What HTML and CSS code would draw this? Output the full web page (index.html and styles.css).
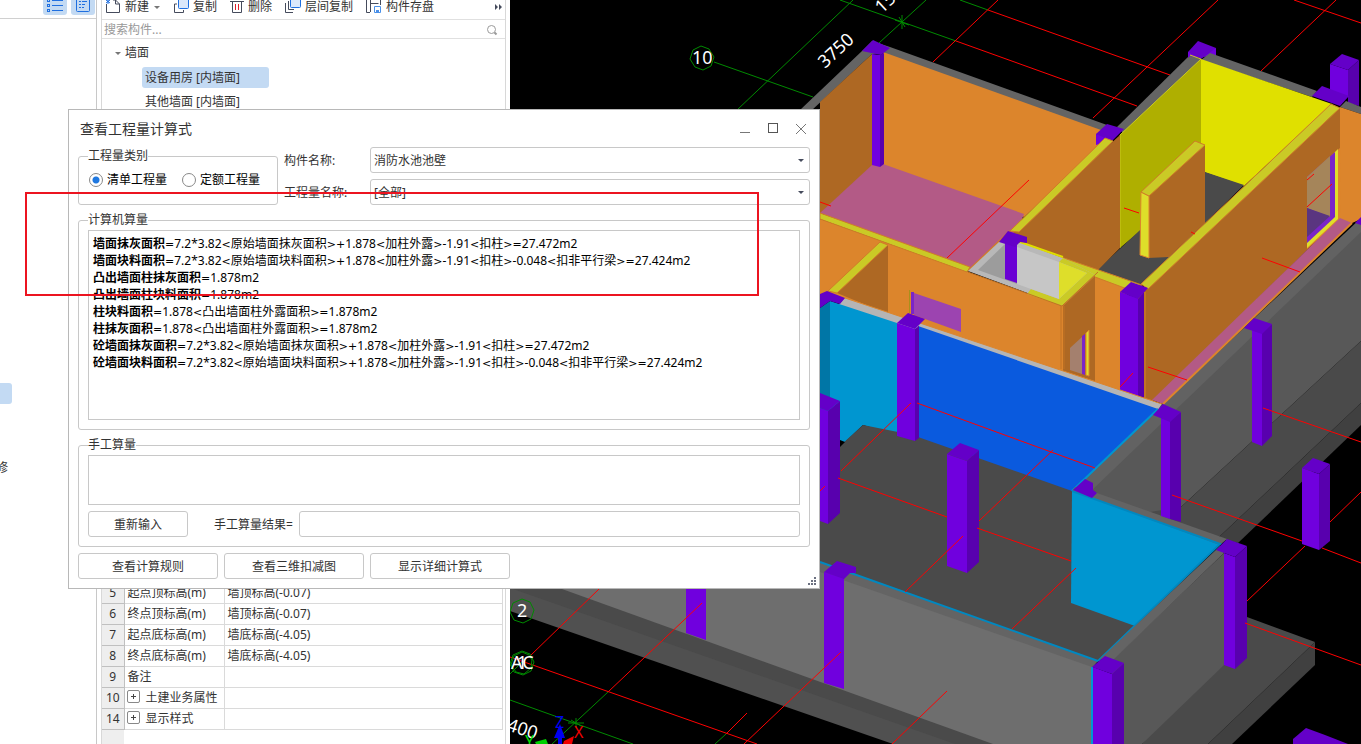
FILE: index.html
```html
<!DOCTYPE html>
<html lang="zh-CN">
  <head>
    <meta charset="utf-8" />
    <title>查看工程量计算式</title>
    <link rel="stylesheet" href="styles.css" />
  </head>

  <body>
    <div class="app">
      <aside class="nav">
        <div class="nav-tools">
          <button class="tool-on" aria-label="列表">
            <svg width="16" height="16" viewBox="0 0 16 16" fill="none" stroke="#1f6fe0">
              <rect x="0.500" y="-0.500" width="2" height="2" />
              <rect x="0.500" y="4.500" width="2" height="2" />
              <rect x="0.500" y="9.500" width="2" height="2" />
              <path d="M5 0.500h11M5 5.500h11M5 10.500h11" />
            </svg>
          </button>
          <button class="tool-on" aria-label="详情">
            <svg width="14" height="16" viewBox="0 0 14 16" fill="none" stroke="#1f6fe0">
              <rect x="0.500" y="-3" width="13" height="14.500" rx="1" />
              <path d="M3 1.500h2M6 1.500h5M3 4.500h2M6 4.500h3M3 7.500h2M6 7.500h2" />
            </svg>
          </button>
        </div>
        <ul class="nav-list">
          <li class="on"></li>
          <li></li>
          <li></li>
          <li>修</li>
        </ul>
      </aside>

      <section class="parts">
        <div class="toolbar">
          <button>
            <svg width="16" height="14" viewBox="0 0 16 14" fill="none" stroke="#454b5c">
              <path d="M1.500 4v8.500h13V4l-4-4H8" />
              <path d="M10.500 0v4h4" />
              <path d="M1 0l4 3M5 0L1 3M3 0v4" stroke="#1f6fe0" />
            </svg>
            新建 <i class="caret"></i>
          </button>
          <button>
            <svg width="16" height="14" viewBox="0 0 16 14" fill="none" stroke="#454b5c">
              <path d="M4 4H1.500v8.500h9V10" />
              <rect x="5.500" y="-2" width="10" height="10.500" rx="1" fill="#dbe8fb" stroke="#1f6fe0" />
            </svg>
            复制
          </button>
          <button>
            <svg width="14" height="14" viewBox="0 0 14 14" fill="none" stroke="#454b5c">
              <path d="M0 1.500h14M2.500 2v10.500h9V2" />
              <path d="M5.500 4v6M8.500 4v6" stroke="#e0202c" />
            </svg>
            删除
          </button>
          <button>
            <svg width="16" height="14" viewBox="0 0 16 14" fill="none" stroke="#454b5c">
              <path d="M0.500 3v9.500H8M3.500 1v8.500H9" />
              <rect x="5.500" y="-2" width="10" height="9.500" rx="1" fill="#dbe8fb" stroke="#1f6fe0" />
            </svg>
            层间复制
          </button>
          <button>
            <svg width="16" height="14" viewBox="0 0 16 14" fill="none" stroke="#454b5c">
              <path d="M0.500 0v12.500H4M4.500 12V0M4.500 3.500h8M14.500 0v5" />
              <path d="M8.500 6.500h6v6h-6z" fill="#fff" stroke="#4a90e8" />
              <path d="M10 10h3v3h-3z" fill="#4a90e8" stroke="none" />
            </svg>
            构件存盘
          </button>
          <button class="more" aria-label="更多">
            <svg width="8" height="6" viewBox="0 0 8 6"><path d="M0 0l3 3-3 3zM4 0l3 3-3 3z" fill="#454b5c" /></svg>
          </button>
        </div>

        <div class="search">
          <input type="text" placeholder="搜索构件..." aria-label="搜索构件" />
          <svg width="12" height="12" viewBox="0 0 12 12" fill="none" stroke="#9a9a9a">
            <circle cx="5.500" cy="5.500" r="4" />
            <path d="M8.500 8.500l2 2" stroke-width="2" />
          </svg>
        </div>

        <ul class="tree">
          <li><i class="caret"></i>墙面</li>
          <li class="leaf"><span class="picked">设备用房 [内墙面]</span></li>
          <li class="leaf"><span>其他墙面 [内墙面]</span></li>
        </ul>

        <table class="props">
          <tbody>
            <tr><th>5</th><td class="name">起点顶标高(m)</td><td>墙顶标高(-0.07)</td></tr>
            <tr><th>6</th><td class="name">终点顶标高(m)</td><td>墙顶标高(-0.07)</td></tr>
            <tr><th>7</th><td class="name">起点底标高(m)</td><td>墙底标高(-4.05)</td></tr>
            <tr><th>8</th><td class="name">终点底标高(m)</td><td>墙底标高(-4.05)</td></tr>
            <tr><th>9</th><td class="name">备注</td><td></td></tr>
            <tr><th>10</th><td class="name"><i class="plus"></i>土建业务属性</td><td></td></tr>
            <tr><th>14</th><td class="name"><i class="plus"></i>显示样式</td><td></td></tr>
            <tr class="rest"><th></th><td></td><td></td></tr>
          </tbody>
        </table>
      </section>

      <main class="view">
        <svg class="scene" viewBox="510 0 851 744" preserveAspectRatio="xMinYMin slice">
          <!-- axis grid behind the model -->
          <g class="axis-green">
            <path d="M714 62L813 97M737 110L853 0M840 0L956 41M926 0L879 43M960 0L988 10" />
            <path d="M895 20l14 5M899 17l6 10M902 15v14" />
            <path d="M510 700L633 744M608 692L552 744M726 734L715 744M510 674l12-12M568 723h16M571 720l10 6M576 718v10" />
            <path d="M714 57l-3 9-8 4-8-3-5-8 3-9 8-4 8 3z" />
          </g>
          <g class="axis-red">
            <path d="M988 10L1170 75M956 41L1137 106M998 0L933 62M1218 0L1093 118M1336 0L1260 72M1294 0L1361 23" />
          </g>

          <!-- outer slab and walls -->
          <polygon fill="#505050" points="510,588 520,588 960,744 893,744 510,611" />
          <polygon fill="#4a4a4a" points="513,580 562,580 1000,744 955,744 513,589" />
          <polygon fill="#585858" points="1361,222 1361,341 1181,507 1181,524 1075,490 1163,404" />
          <polygon fill="#626262" points="1361,218 1361,232 1090,492 1073,490 1163,404" />
          <polygon fill="#4a4a4a" points="1361,341 1361,403 1218,538 1150,512 1181,507" />
          <polygon fill="#404040" points="1361,403 1361,425 1238,543 1218,538" />
          <polygon fill="#4a4a4a" points="1224,640 1247,617 1315,642 1208,744 1142,744" />
          <polygon fill="#404040" points="1315,642 1315,665 1232,744 1208,744" />
          <polygon fill="#585858" points="1224,553 1224,665 1142,744 1124,744 1112,674 1112,660" />

          <!-- back left room -->
          <polygon fill="#646464" points="862,51 872,41 890,47 1107,125 1100,131 883,53 872,54 812,110 800,110" />
          <polygon fill="#ae6823" points="872,54 872,166 820,214 820,102" />
          <polygon fill="#dc852c" points="883,52 1101,130 1110,140 1024,217 883,165" />
          <polygon fill="#b35a86" points="872,165 883,164 1024,214 1012,246 968,271 820,213" />
          <polygon fill="#6400c8" points="873,40 890,48 881,55 862,51" />
          <polygon fill="#7000de" points="872,54 880,55 880,167 872,165" />
          <polygon fill="#5800ae" points="880,55 884,53 884,164 880,167" />

          <!-- yellow room -->
          <polygon fill="#646464" points="1190,55 1201,59 1123,133 1117,127" />
          <polygon fill="#7000de" points="1188,52 1216,48 1216,56 1188,58" />
          <polygon fill="#6400c8" points="1198,41 1216,48 1201,59 1188,52" />
          <polygon fill="#646464" points="1210,53 1317,91 1312,97 1201,60" />
          <polygon fill="#646464" points="1190,56 1201,59 1192,68 1180,66" />
          <polygon fill="#afaf00" points="1120,135 1201,59 1201,180 1120,248" />
          <polygon fill="#e0e000" points="1201,59 1332,104 1244,186 1201,171" />
          <path d="M1120 248V135L1201 59l-11-4" fill="none" stroke="#cccc1e" />
          <polygon fill="#4a4a4a" points="1205,172 1244,185 1142,285 1097,270 1139,231" />
          <polygon fill="#7000de" points="1096,134 1112,132 1112,141 1096,145" />
          <polygon fill="#6400c8" points="1107,124 1124,129 1112,141 1096,134" />
          <polygon fill="#ae6823" points="1120,135 1120,248 1097,271 1018,246 1012,234" />
          <polygon class="top" points="1105,138 1113,141 1019,232 1010,231" />
          <path d="M1010 231L968 271" stroke="#cf7c28" stroke-width="2" />

          <!-- partition -->
          <polygon fill="#ae6823" points="1149,196 1205,145 1205,223 1169,257 1148,258" />
          <polygon fill="#dede2a" stroke="#dc852c" points="1141,192 1149,196 1149,258 1140,255" />
          <polygon class="top" points="1141,192 1195,141 1205,145 1149,196" />

          <!-- long wall and its window -->
          <polygon fill="#7000de" points="1330,64 1348,70 1348,97 1330,95" />
          <polygon fill="#5800ae" points="1348,70 1359,60 1359,106 1348,103" />
          <polygon fill="#6400c8" points="1342,54 1359,60 1348,70 1330,64" />
          <polygon fill="#646464" points="1346,101 1361,107 1361,114 1340,107" />
          <polygon fill="#6400c8" points="1322,86 1349,96 1340,106 1312,96" />
          <polygon fill="#dc852c" points="1340,107 1361,114 1361,219 1350,224 1336,219" />
          <polygon fill="#ae6823" points="1340,108 1340,218 1152,402 1138,400 1138,294" />
          <polygon class="top" points="1331,104 1340,108 1148,289 1141,284" />
          <polygon fill="#dc852c" points="1340,148 1341,220 1307,249 1307,177" />
          <polygon fill="#e0de2a" points="1338,149 1338,219 1307,248 1307,240 1334,215 1334,153" />
          <polygon fill="#7a25c8" points="1335,152 1335,217 1307,243 1307,177" />
          <polygon fill="#a5855a" points="1330,156 1330,217 1307,208 1307,177" />
          <polygon fill="#5a3580" points="1307,208 1330,216 1307,237" />
          <polygon fill="#b35a86" points="1340,218 1352,223 1163,404 1152,400" />
          <path d="M1352 223L1163 404" stroke="#dc852c" stroke-width="2" />
          <polygon fill="#6400c8" points="1355,223 1361,217 1361,225" />

          <!-- shaft and corridor -->
          <polygon fill="#dc852c" points="820,219 968,272 1062,306 1095,275 1127,286 1127,394 1062,373 845,301 820,300" />
          <polygon class="top" points="820,213 970,267 967,272 820,219" />
          <polygon class="top" points="1061,257 1142,285 1130,290 1095,277" />
          <polygon fill="#ae6823" points="1063,306 1095,276 1095,381 1063,371" />
          <path d="M1061 306v63M1064 306v63" stroke="#c27325" />
          <polygon fill="#b8b8b8" points="999,242 1022,243 1063,258 1095,275 1062,306 968,271" />
          <polygon fill="#caca26" points="1063,258 1095,275 1062,306 1027,294 1031,289 1059,299 1087,273 1059,262" />
          <path d="M1020 242L1063 257" stroke="#dede00" stroke-width="2" />
          <polygon fill="#9c9c9c" points="1005,244 1017,247 1017,284 978,270" />
          <polygon fill="#c6c6c6" points="1017,247 1059,262 1059,299 1017,284" />
          <polygon fill="#dede2a" points="1059,262 1087,273 1059,299" />
          <path d="M968 272L1062 306L1098 272" fill="none" stroke="#c27325" />
          <polygon fill="#6a00d4" points="1005,240 1017,243 1017,283 1005,279" />
          <polygon fill="#6400c8" points="1008,231 1027,237 1027,243 1020,242 1015,247 999,242" />
          <polygon fill="#a4806e" points="1070,348 1082,337 1082,374 1070,370" />
          <polygon fill="#7a25c8" points="1082,336 1085,334 1085,375 1082,374" />
          <polygon fill="#e0de2a" stroke="#dc852c" points="1086,333 1089,330 1089,376 1086,375" />
          <polygon fill="#ae6823" points="888,245 888,314 837,293" />
          <polygon class="top" points="880,242 888,245 837,293 828,291" />
          <polygon fill="#9c44b0" points="914,293 961,309 961,332 914,315" />
          <path d="M912.500 292v22" stroke="#7a25c8" stroke-width="3" />
          <path d="M909.500 290v23" stroke="#a8901c" />
          <polygon fill="#5800ae" points="1138,299 1144,292 1144,400 1138,398" />
          <polygon fill="#7000de" points="1120,292 1138,298 1138,398 1120,392" />
          <polygon fill="#6400c8" points="1131,282 1148,288 1138,299 1120,292" />
          <path d="M1145 292v106" stroke="#c27325" stroke-width="2" />

          <!-- blue pool walls -->
          <polygon fill="#b5b5b5" points="845,298 1162,404 1157,411 838,305" />
          <path d="M845 298L1162 404" stroke="#dc852c" />
          <polygon fill="#0076a6" points="830,301 830,450 820,450 820,308" />
          <polygon fill="#0096d0" points="830,301 897,323 897,435 863,425 845,442 830,450" />
          <polygon fill="#4a4a4a" points="863,425 918,436 1072,489 1137,628 1098,661 820,562 820,464" />
          <polygon fill="#0a5ade" points="918,326 1158,409 1072,491 918,437" />
          <path d="M1158 409L1072 491" stroke="#0096d0" stroke-width="2" />
          <polygon points="840,440 845,442 840,447" />
          <polygon fill="#6400c8" points="827,291 845,298 840,304 830,301 820,308 820,294" />
          <polygon fill="#0096d0" points="1072,491 1220,544 1135,626 1071,603" />

          <!-- near walls -->
          <polygon fill="#646464" points="1075,487 1097,493 1227,539 1220,545 1072,491" />
          <path d="M1072 491L1220 544L1098 661" fill="none" stroke="#0088c0" stroke-width="2" />
          <polygon fill="#646464" points="1220,546 1224,553 1112,661 1100,659" />
          <polygon fill="#646464" points="540,470 820,562 1098,661 1092,668 820,573 560,580" />
          <polygon fill="#6e6e6e" points="550,584 820,572 1092,667 1092,744 993,744 562,589" />
          <path d="M820 562L1098 661" stroke="#0088c0" stroke-width="2" />
          <path d="M1092 667v77" stroke="#0096d0" stroke-width="2" />

          <!-- columns -->
          <g fill="#7000de">
            <polygon points="1161,416 1170,420 1170,519 1161,516" />
            <polygon points="1252,330 1262,333 1262,446 1252,442" />
            <polygon points="1302,468 1319,474 1319,550 1302,544" />
            <polygon points="947,454 967,461 967,573 947,566" />
            <polygon points="897,323 915,329 915,441 897,436" />
            <polygon points="820,408 828,411 828,524 820,521" />
            <polygon points="1224,553 1235,557 1235,669 1224,665" />
            <polygon points="1093,667 1112,674 1112,744 1093,744" />
            <polygon points="824,572 844,578 844,689 824,683" />
            <polygon points="686,580 706,580 706,640 686,633" />
          </g>
          <g fill="#5800ae">
            <polygon points="1170,421 1181,412 1181,522 1170,519" />
            <polygon points="1262,333 1272,324 1272,436 1262,446" />
            <polygon points="1319,474 1330,464 1330,541 1319,550" />
            <polygon points="967,461 979,450 979,562 967,573" />
            <polygon points="915,329 919,326 919,438 915,441" />
            <polygon points="828,411 840,401 840,513 828,524" />
            <polygon points="1235,557 1247,546 1247,658 1235,669" />
            <polygon points="1112,674 1124,663 1124,744 1112,744" />
          </g>
          <g fill="#6400c8">
            <polygon points="1163,404 1181,412 1170,422 1153,415" />
            <polygon points="1254,318 1272,324 1262,334 1244,328" />
            <polygon points="1313,458 1330,464 1319,474 1302,468" />
            <polygon points="960,443 979,450 967,461 947,454" />
            <polygon points="908,313 925,319 915,329 897,323" />
            <polygon points="820,393 840,401 828,411 820,408" />
            <polygon points="1227,539 1247,546 1235,557 1216,550" />
            <polygon points="1105,656 1124,663 1112,674 1092,667" />
            <polygon points="837,561 856,567 856,573 850,573 844,579 824,572" />
            <polygon points="1085,479 1093,483 1093,490 1097,493 1092,498 1073,490" />
            <polygon points="1306,728 1325,735 1348,744 1293,744 1293,739" />
          </g>

          <!-- axis lines seen over the model -->
          <g class="axis-red">
            <path d="M1029 180L947 258M820 202L831 206M1124 208L1139 213M1191 232l4 2M1262 258L1300 272M1148 367L1187 380M1307 207L1332 184M1307 180l7-6" />
            <path d="M917 403L1095 468M911 403L841 471M820 491l5-5M1053 450L979 521M838 478L947 517M1263 408L1361 442M1133 373L1120 387" />
            <path d="M1172 495L1302 541M1322 548L1361 563M1361 492L1330 522M1305 546L1247 601M1245 623L1361 665" />
            <path d="M977 528L1071 561M1076 568L1012 629M963 536L905 592M947 691L892 744" />
            <path d="M599 589L530 656M702 603L608 692M841 652L744 744M747 713L726 734M510 657L757 744" />
          </g>
          <g class="axis-green">
            <path d="M534 610l-3 9-8 4-9-3-4-8 3-9 9-4 8 3z" />
            <path d="M534 662l-3 9-8 4-9-3-4-8 3-9 9-4 8 3zM532 660l-1 8-7 6-8-2-5-7 3-9 8-4 7 3z" />
          </g>

          <g class="axis-text">
            <text x="692" y="64">10</text>
            <text x="517" y="617">2</text>
            <text x="511" y="669">AC</text>
            <text x="517" y="669">1</text>
            <text transform="translate(825 69) rotate(-43)">3750</text>
            <text transform="translate(882 14) rotate(-43)">15</text>
            <text transform="translate(506 730) rotate(18)">400</text>
          </g>

          <!-- coordinate gizmo -->
          <g class="gizmo">
            <path d="M554 738l6-14 5 14zM558 736h4v8h-4z" fill="#0000f0" />
            <path d="M564 741l10-5-2 8h-9z" fill="#f00000" />
            <path d="M535 742l11-3 2 5h-12z" fill="#00d000" />
            <text x="555" y="728" fill="#0000f0">Z</text>
            <text x="574" y="738" fill="#f00000">X</text>
            <text x="525" y="747" fill="#00e000">Y</text>
          </g>
        </svg>
      </main>
    </div>

    <div class="dialog" role="dialog" aria-labelledby="dlgTitle">
      <div class="title-bar">
        <h1 id="dlgTitle">查看工程量计算式</h1>
        <button aria-label="最小化">
          <svg width="12" height="12" viewBox="0 0 12 12"><path d="M1 9.500h10" stroke="#777" /></svg>
        </button>
        <button aria-label="最大化">
          <svg width="12" height="12" viewBox="0 0 12 12"><rect x="1.500" y="0.500" width="9" height="9" fill="none" stroke="#555" /></svg>
        </button>
        <button aria-label="关闭">
          <svg width="12" height="12" viewBox="0 0 12 12"><path d="M1 1l10 10M11 1L1 11" stroke="#777" /></svg>
        </button>
      </div>

      <div class="filters">
        <fieldset class="kind">
          <legend>工程量类别</legend>
          <label><input type="radio" name="kind" checked />清单工程量</label>
          <label><input type="radio" name="kind" />定额工程量</label>
        </fieldset>
        <div class="combos">
          <label for="partName">构件名称:</label>
          <div class="combo">
            <select id="partName"><option>消防水池池壁</option></select>
          </div>
          <label for="qtyName">工程量名称:</label>
          <div class="combo">
            <select id="qtyName"><option>[全部]</option></select>
          </div>
        </div>
      </div>

      <fieldset>
        <legend>计算机算量</legend>
        <div class="formulas">
          <p><b>墙面抹灰面积</b><i>=</i>7.2*3.82<i>&lt;</i>原始墙面抹灰面积<i>&gt;+</i>1.878<i>&lt;</i>加柱外露<i>&gt;</i>-1.91<i>&lt;</i>扣柱<i>&gt;=</i>27.472m2</p>
          <p><b>墙面块料面积</b><i>=</i>7.2*3.82<i>&lt;</i>原始墙面块料面积<i>&gt;+</i>1.878<i>&lt;</i>加柱外露<i>&gt;</i>-1.91<i>&lt;</i>扣柱<i>&gt;</i>-0.048<i>&lt;</i>扣非平行梁<i>&gt;=</i>27.424m2</p>
          <p><b>凸出墙面柱抹灰面积</b><i>=</i>1.878m2</p>
          <p><b>凸出墙面柱块料面积</b><i>=</i>1.878m2</p>
          <p><b>柱块料面积</b><i>=</i>1.878<i>&lt;</i>凸出墙面柱外露面积<i>&gt;=</i>1.878m2</p>
          <p><b>柱抹灰面积</b><i>=</i>1.878<i>&lt;</i>凸出墙面柱外露面积<i>&gt;=</i>1.878m2</p>
          <p><b>砼墙面抹灰面积</b><i>=</i>7.2*3.82<i>&lt;</i>原始墙面抹灰面积<i>&gt;+</i>1.878<i>&lt;</i>加柱外露<i>&gt;</i>-1.91<i>&lt;</i>扣柱<i>&gt;=</i>27.472m2</p>
          <p><b>砼墙面块料面积</b><i>=</i>7.2*3.82<i>&lt;</i>原始墙面块料面积<i>&gt;+</i>1.878<i>&lt;</i>加柱外露<i>&gt;</i>-1.91<i>&lt;</i>扣柱<i>&gt;</i>-0.048<i>&lt;</i>扣非平行梁<i>&gt;=</i>27.424m2</p>
        </div>
      </fieldset>

      <fieldset>
        <legend>手工算量</legend>
        <textarea aria-label="手工算量"></textarea>
        <div class="manual">
          <button class="btn small">重新输入</button>
          <label for="result">手工算量结果=</label>
          <input type="text" id="result" />
        </div>
      </fieldset>

      <div class="actions">
        <button class="btn">查看计算规则</button>
        <button class="btn">查看三维扣减图</button>
        <button class="btn">显示详细计算式</button>
      </div>
      <svg class="grip" width="9" height="9" viewBox="0 0 9 9">
        <path d="M6 0h2v2H6zM3 3h2v2H3zM6 3h2v2H6zM0 6h2v2H0zM3 6h2v2H3zM6 6h2v2H6z" fill="#6b7080" />
      </svg>
    </div>

    <div class="mark"></div>
  </body>
</html>
```
FILE: styles.css
```css
* {
  box-sizing: border-box;
}

body {
  margin: 0;
  overflow: hidden;
  font-family: "Noto Sans", "Noto Sans CJK SC", sans-serif;
  font-size: 12px;
  line-height: 18px;
  color: #333;
  background-color: #fff;
}

button,
input,
select,
textarea {
  font: inherit;
  color: inherit;
}

button {
  padding: 0;
  border: none;
  background: none;
  white-space: nowrap;
}

ul {
  list-style: none;
  margin: 0;
  padding: 0;
}

.app {
  display: flex;
  height: 100vh;
}

/* left navigation */
.nav {
  width: 97px;
  border-right: 1px solid #c8c8c8;
  overflow: hidden;
}

.nav-tools {
  display: flex;
  justify-content: flex-end;
  gap: 4px;
  height: 19px;
  padding: 0 1px 3px 0;
  border-bottom: 1px solid #d0d0d0;
}

.tool-on {
  width: 24px;
  border-radius: 0 0 3px 3px;
  background-color: #c3daf3;
}

.tool-on svg {
  display: block;
  margin: 0 auto;
}

.nav-list {
  margin-top: 364px;
  margin-left: -4px;
}

.nav-list li {
  height: 26px;
  line-height: 24px;
}

.nav-list .on {
  width: 16px;
  height: 21px;
  border-radius: 3px;
  background-color: #c3daf3;
}

/* component panel */
.parts {
  display: flex;
  flex-direction: column;
  width: 405px;
  margin: 0 4px;
  border: solid #d8d8d8;
  border-width: 0 1px;
}

.toolbar {
  display: flex;
  align-items: center;
  gap: 13px;
  height: 20px;
  padding: 0 2px 5px 3px;
  border-bottom: 1px solid #e0e0e0;
}

.toolbar button {
  display: flex;
  align-items: center;
  gap: 4px;
}

.toolbar .more {
  margin-left: auto;
}

.caret {
  border: 3px solid transparent;
  border-top-color: #777;
  border-bottom: none;
}

.toolbar .caret {
  margin-left: 1px;
}

.search {
  display: flex;
  align-items: center;
  height: 19px;
  padding: 1px 7px 0 2px;
  border-bottom: 1px solid #e0e0e0;
}

.search input {
  flex: 1;
  padding: 0;
  border: none;
  outline: none;
  background: none;
}

.search input::placeholder {
  color: #999;
}

.tree {
  padding: 2px 0 0 13px;
}

.tree li {
  display: flex;
  align-items: center;
  gap: 4px;
  height: 24px;
}

.tree .leaf {
  padding-left: 27px;
}

.tree span {
  width: 127px;
  padding: 2px 3px 1px;
  border-radius: 3px;
}

.tree .picked {
  background-color: #c3daf3;
}

.props {
  width: 401px;
  margin-top: auto;
  table-layout: fixed;
  border-collapse: collapse;
}

.props th,
.props td {
  height: 21px;
  padding: 1px 3px 0;
  border: 1px solid #dadada;
  border-left: none;
  line-height: 18px;
  white-space: nowrap;
  text-align: left;
}

.props th {
  width: 22px;
  padding: 1px 0 0;
  font-weight: normal;
  text-align: center;
  background-color: #eee;
  border-color: #c0c0c0;
}

.props .name {
  width: 100px;
}

.props .rest th,
.props .rest td {
  height: 15px;
  border: none;
}

.plus {
  display: inline-block;
  width: 13px;
  height: 13px;
  margin: 0 6px 0 -1px;
  border: 1px solid #888;
  border-radius: 2px;
  vertical-align: -1px;
  background: linear-gradient(#444, #444) center / 5px 1px no-repeat,
    linear-gradient(#444, #444) center / 1px 5px no-repeat;
}

/* 3d view */
.view {
  flex: 1;
  min-width: 0;
  background-color: #000;
}

.scene {
  display: block;
  width: 100%;
  height: 100%;
}

.axis-green {
  fill: none;
  stroke: #008a00;
}

.axis-red {
  fill: none;
  stroke: #ff0000;
}

.axis-text {
  fill: #fff;
  font-size: 18px;
}

.gizmo {
  font-size: 16px;
}

.top {
  fill: #caca26;
  stroke: #cf7c28;
}

/* dialog */
.dialog {
  position: absolute;
  left: 68px;
  top: 109px;
  display: flex;
  flex-direction: column;
  gap: 6px;
  width: 752px;
  padding: 0 9px 9px;
  border: 1px solid #b8b8b8;
  background-color: #fff;
}

.title-bar {
  display: flex;
  align-items: center;
  gap: 16px;
  height: 31px;
  padding: 6px 3px 0 2px;
}

.title-bar h1 {
  flex: 1;
  margin: 0;
  font-size: 14px;
  font-weight: normal;
}

.title-bar svg {
  display: block;
}

.filters {
  display: flex;
  gap: 6px;
}

fieldset {
  min-width: 0;
  margin: 0;
  padding: 1px 9px 9px;
  border: 1px solid #c8c8c8;
  border-radius: 3px;
}

legend {
  padding: 0;
  line-height: 18px;
}

.kind {
  display: flex;
  gap: 15px;
  width: 200px;
  padding: 6px 9px 8px 10px;
  color: #000;
}

.kind legend {
  margin-left: -1px;
  color: #333;
}

.kind label {
  display: flex;
  align-items: center;
  gap: 4px;
  height: 18px;
  white-space: nowrap;
}

.kind input {
  appearance: none;
  width: 14px;
  height: 14px;
  margin: 0;
  border: 1px solid #888;
  border-radius: 50%;
}

.kind input:checked {
  background: radial-gradient(#1f78e0 3px, #fff 4px);
}

.combos {
  flex: 1;
  display: grid;
  grid-template-columns: 80px 1fr;
  align-items: center;
  gap: 6px;
}

.combos label {
  padding-top: 2px;
}

.combo {
  position: relative;
}

.combo::after {
  content: "";
  position: absolute;
  right: 6px;
  top: 12px;
  border: 3px solid transparent;
  border-top-color: #454b5c;
  border-bottom: none;
}

.combo select,
.manual input {
  display: block;
  width: 100%;
  height: 26px;
  padding: 2px 3px 0;
  border: 1px solid #c8c8c8;
  border-radius: 3px;
  background-color: #fff;
  appearance: none;
}

.formulas {
  height: 190px;
  padding: 4px;
  border: 1px solid #c8c8c8;
  color: #000;
  white-space: nowrap;
}

.formulas p {
  margin: 0;
  line-height: 17px;
}

/* operators are set wider than the digits */
.formulas i {
  font-family: "DejaVu Sans", sans-serif;
  font-size: 11px;
  font-style: normal;
  line-height: 1;
}

textarea {
  display: block;
  width: 100%;
  height: 50px;
  border: 1px solid #c8c8c8;
  resize: none;
}

.manual {
  display: flex;
  align-items: center;
  gap: 6px;
  margin-top: 6px;
}

.manual label {
  margin-left: 20px;
  padding-top: 2px;
  white-space: nowrap;
}

.manual input {
  flex: 1;
}

.btn {
  width: 140px;
  height: 26px;
  padding-top: 2px;
  border: 1px solid #c8c8c8;
  border-radius: 3px;
  background-color: #fff;
}

.btn.small {
  width: 100px;
}

.actions {
  display: flex;
  gap: 6px;
}

.grip {
  position: absolute;
  right: 2px;
  bottom: 2px;
}

/* highlighted area */
.mark {
  position: absolute;
  left: 25px;
  top: 192px;
  width: 734px;
  height: 104px;
  border: 2px solid #ec1420;
  pointer-events: none;
}
```
